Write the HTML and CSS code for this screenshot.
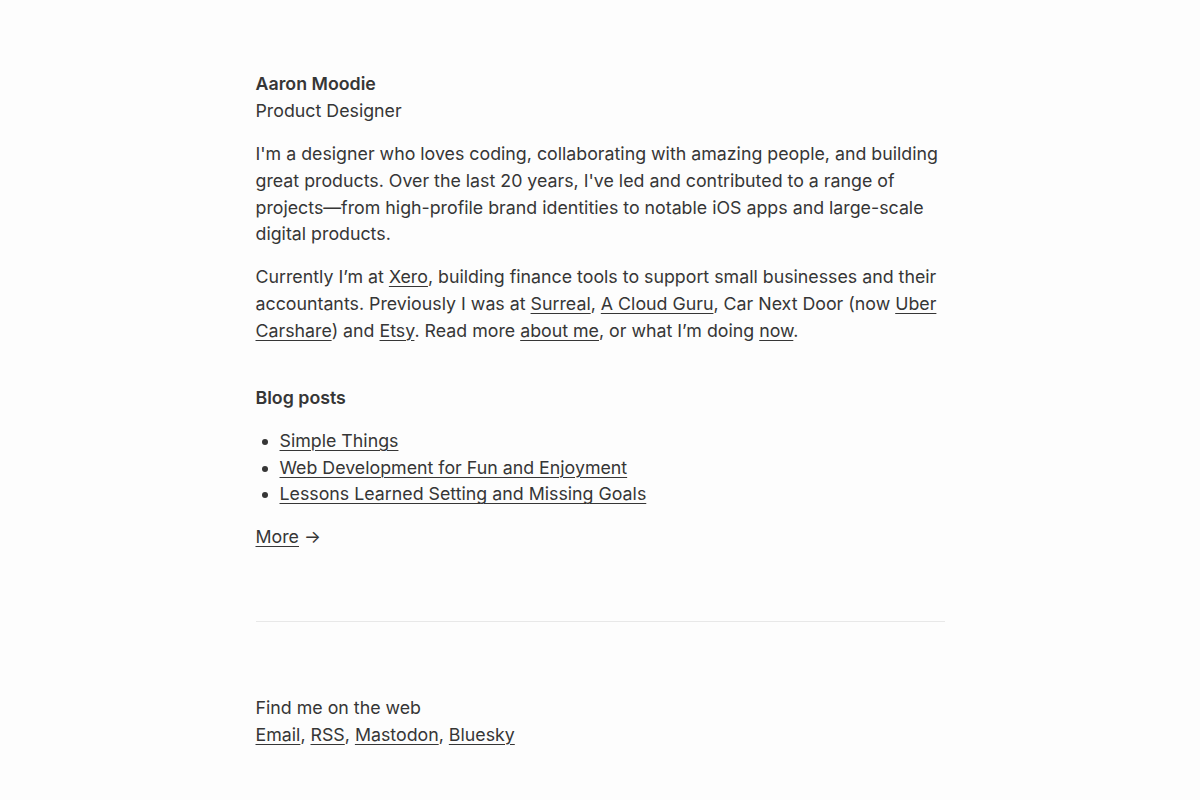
FILE: index.html
```html
<!DOCTYPE html>
<html lang="en">
  <head>
    <meta charset="UTF-8" />
    <meta name="viewport" content="width=device-width, initial-scale=1.0" />
    <title>Aaron Moodie</title>
    <link rel="stylesheet" href="styles.css">
  </head>
  <body>
    <main class="page">
      <header class="intro">
        <h1 class="name">Aaron Moodie</h1>
        <p class="role">Product Designer</p>
      </header>

      <p>
        I'm a designer who loves coding, collaborating with amazing people, and building
        great products. Over the last 20 years, I've led and contributed to a range of
        projects—from high-profile brand identities to notable iOS apps and large-scale
        digital products.
      </p>
      <p>
        Currently I’m at <a href="#">Xero</a>, building finance tools to support small
        businesses and their accountants. Previously I was at <a href="#">Surreal</a>,
        <a href="#">A Cloud Guru</a>, Car Next Door (now <a href="#">Uber Carshare</a>)
        and <a href="#">Etsy</a>. Read more <a href="#">about me</a>, or what I’m doing
        <a href="#">now</a>.
      </p>

      <section class="posts">
        <h2>Blog posts</h2>
        <ul>
          <li><a href="#">Simple Things</a></li>
          <li><a href="#">Web Development for Fun and Enjoyment</a></li>
          <li><a href="#">Lessons Learned Setting and Missing Goals</a></li>
        </ul>
        <p><a href="#">More</a> →</p>
      </section>

      <footer class="footer">
        <p>
          Find me on the web<br />
          <a href="#">Email</a>, <a href="#">RSS</a>, <a href="#">Mastodon</a>,
          <a href="#">Bluesky</a>
        </p>
      </footer>
    </main>
  </body>
</html>
```

FILE: styles.css
```css
body {
  margin: 0;
  background: #fdfdfd;
  color: #363636;
  font-family: Inter, "Noto Sans", sans-serif;
  font-size: 17.8px;
  line-height: 1.5;
}
.page {
  max-width: 689px;
  margin: 0 auto;
  padding: 71px 0 40px;
}
p {
  margin: 0 0 16px;
}
a {
  color: inherit;
  text-decoration: underline;
  text-underline-offset: 3px;
  text-decoration-thickness: 1px;
}
.intro {
  margin-bottom: 17px;
}
.name {
  margin: 0;
  font-size: inherit;
  font-weight: 600;
}
.role {
  margin: 0;
}
.posts {
  margin-top: 41px;
}
.posts h2 {
  margin: 0 0 16px;
  font-size: inherit;
  font-weight: 600;
}
.posts ul {
  margin: 0 0 16px;
  padding-left: 24px;
}
.footer {
  margin-top: 70px;
  padding-top: 72px;
  border-top: 1px solid #e8e8e8;
}
.footer p {
  line-height: 27px;
}
```
